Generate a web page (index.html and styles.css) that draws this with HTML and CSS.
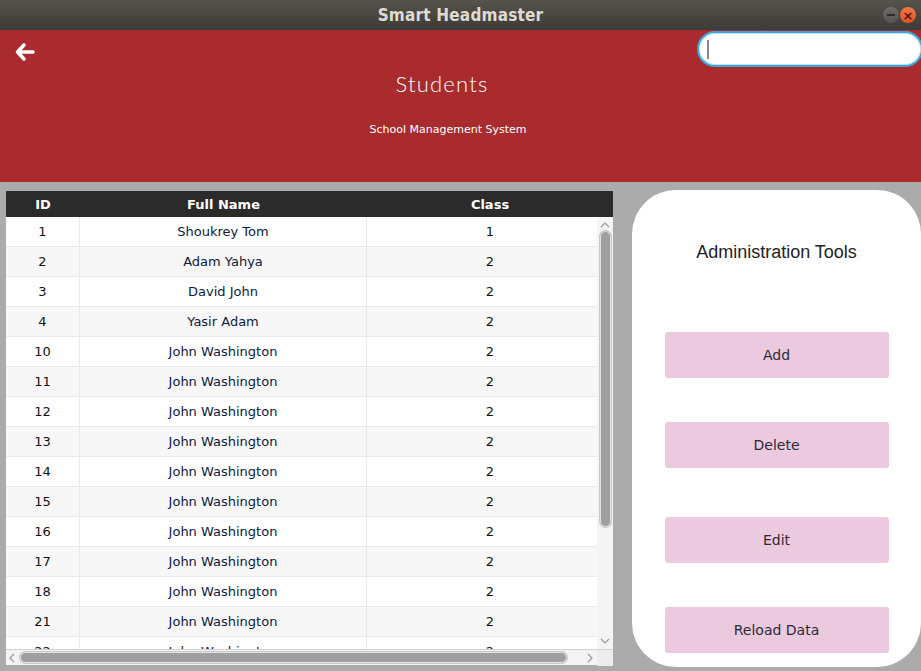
FILE: index.html
```html
<!DOCTYPE html>
<html>
<head>
<meta charset="utf-8">
<link rel="stylesheet" href="styles.css">
</head>
<body>
<div class="window">
  <div class="titlebar">
    <span class="title">Smart Headmaster</span>
    <div class="controls">
      <span class="btn-min"><span class="dash"></span></span>
      <span class="btn-close">×</span>
    </div>
  </div>
  <header class="hero">
    <svg class="back" width="20" height="20" viewBox="0 0 20 20"><path d="M9 3 L2.5 10 L9 17 M3 10 H18" fill="none" stroke="#fff" stroke-width="3.6" stroke-linecap="round" stroke-linejoin="round"/></svg>
    <div class="search"><span class="caret"></span></div>
    <h1 class="page-title">Students</h1>
    <p class="subtitle">School Management System</p>
  </header>
  <main class="content">
    <section class="table">
      <div class="thead">
        <div class="c-id">ID</div><div class="c-name">Full Name</div><div class="c-class">Class</div>
      </div>
      <div class="tbody">
        <div class="row"><div class="c-id">1</div><div class="c-name">Shoukrey Tom</div><div class="c-class">1</div></div>
        <div class="row"><div class="c-id">2</div><div class="c-name">Adam Yahya</div><div class="c-class">2</div></div>
        <div class="row"><div class="c-id">3</div><div class="c-name">David John</div><div class="c-class">2</div></div>
        <div class="row"><div class="c-id">4</div><div class="c-name">Yasir Adam</div><div class="c-class">2</div></div>
        <div class="row"><div class="c-id">10</div><div class="c-name">John Washington</div><div class="c-class">2</div></div>
        <div class="row"><div class="c-id">11</div><div class="c-name">John Washington</div><div class="c-class">2</div></div>
        <div class="row"><div class="c-id">12</div><div class="c-name">John Washington</div><div class="c-class">2</div></div>
        <div class="row"><div class="c-id">13</div><div class="c-name">John Washington</div><div class="c-class">2</div></div>
        <div class="row"><div class="c-id">14</div><div class="c-name">John Washington</div><div class="c-class">2</div></div>
        <div class="row"><div class="c-id">15</div><div class="c-name">John Washington</div><div class="c-class">2</div></div>
        <div class="row"><div class="c-id">16</div><div class="c-name">John Washington</div><div class="c-class">2</div></div>
        <div class="row"><div class="c-id">17</div><div class="c-name">John Washington</div><div class="c-class">2</div></div>
        <div class="row"><div class="c-id">18</div><div class="c-name">John Washington</div><div class="c-class">2</div></div>
        <div class="row"><div class="c-id">21</div><div class="c-name">John Washington</div><div class="c-class">2</div></div>
        <div class="row"><div class="c-id">22</div><div class="c-name">John Washington</div><div class="c-class">2</div></div>
        <div class="vscroll">
          <svg class="arrow" width="12" height="8" viewBox="0 0 12 8"><path d="M2 6 L6 2 L10 6" fill="none" stroke="#999" stroke-width="1.2"/></svg>
          <div class="vthumb"></div>
          <svg class="arrow" width="12" height="8" viewBox="0 0 12 8"><path d="M2 2 L6 6 L10 2" fill="none" stroke="#999" stroke-width="1.2"/></svg>
        </div>
      </div>
      <div class="hscroll">
        <svg class="harrow" width="8" height="12" viewBox="0 0 8 12"><path d="M6 2 L2 6 L6 10" fill="none" stroke="#999" stroke-width="1.2"/></svg>
        <div class="htrack"><div class="hthumb"></div></div>
        <svg class="harrow" width="8" height="12" viewBox="0 0 8 12"><path d="M2 2 L6 6 L2 10" fill="none" stroke="#999" stroke-width="1.2"/></svg>
        <div class="corner"></div>
      </div>
    </section>
    <aside class="panel">
      <h2 class="panel-title">Administration Tools</h2>
      <button class="tool tool-add">Add</button>
      <button class="tool tool-delete">Delete</button>
      <button class="tool tool-edit">Edit</button>
      <button class="tool tool-reload">Reload Data</button>
    </aside>
  </main>
</div>
</body>
</html>
```
FILE: styles.css
```css
* { box-sizing: border-box; }
html, body { margin: 0; padding: 0; }
body {
  width: 921px;
  height: 671px;
  overflow: hidden;
  background: #ababab;
  font-family: "DejaVu Sans", sans-serif;
}
.window { width: 921px; height: 671px; display: flex; flex-direction: column; }

.titlebar {
  height: 30px;
  flex: none;
  background: linear-gradient(#56534d, #3d3b37);
  display: flex;
  align-items: center;
  justify-content: center;
  position: relative;
}
.title {
  color: #dfdbd2;
  font-family: "DejaVu Sans Condensed", "DejaVu Sans", sans-serif;
  font-weight: bold;
  font-size: 17px;
  letter-spacing: 0.2px;
}
.controls {
  position: absolute;
  right: 5px;
  top: 7px;
  display: flex;
  gap: 1px;
}
.btn-min, .btn-close {
  width: 16px; height: 16px; border-radius: 50%;
  display: flex; align-items: center; justify-content: center;
}
.btn-min { background: linear-gradient(#6f6d68, #55534f); }
.btn-min .dash { width: 8px; height: 1.5px; background: #2e2d2b; }
.btn-close {
  background: linear-gradient(#f2764a, #e05424);
  color: #4a1b0a; font-size: 13px; line-height: 1; font-weight: bold;
}

.hero {
  height: 152px;
  flex: none;
  background: #a92b2e;
  position: relative;
  display: flex;
  flex-direction: column;
  align-items: center;
  padding-right: 39px;
}
.back { position: absolute; left: 15px; top: 12px; }
.search {
  position: absolute;
  left: 697px; top: 1px;
  width: 226px; height: 36px;
  background: #fff;
  border: 2px solid #3ba7d9;
  border-radius: 18px;
  box-shadow: inset 0 0 0 1px #bfe3f3;
}
.caret {
  position: absolute; left: 8px; top: 7px;
  width: 2px; height: 19px; background: #8a8a8a;
}
.page-title {
  margin: 41px 0 0 0;
  font-family: "Lato", sans-serif;
  font-weight: 300;
  font-size: 22px;
  letter-spacing: 1.2px;
  color: #fff;
  line-height: 26px;
  padding-left: 2px;
}
.subtitle {
  margin: 26px 0 0 14px;
  font-size: 11px;
  color: #fff;
  line-height: 14px;
}

.content {
  flex: 1;
  display: flex;
  align-items: flex-start;
  padding: 8px 0 0 6px;
  gap: 19px;
}

.table {
  margin-top: 1px;
  width: 607px;
  height: 474px;
  background: #fff;
  display: flex;
  flex-direction: column;
  font-size: 13px;
  color: #111;
}
.thead {
  height: 26px;
  flex: none;
  background: #2b2b2b;
  color: #fff;
  font-weight: bold;
  display: flex;
  align-items: center;
}
.c-id { width: 74px; text-align: center; flex: none; }
.c-name { width: 287px; text-align: center; flex: none; }
.c-class { flex: 1; text-align: center; }
.tbody {
  flex: 1;
  position: relative;
  overflow: hidden;
}
.row {
  height: 30px;
  display: flex;
  align-items: stretch;
  border-bottom: 1px solid #e9e9e9;
  background: #fff;
}
.row:nth-child(even) { background: #f7f7f7; }
.row > div { display: flex; align-items: center; justify-content: center; }
.row .c-id { border-right: 1px solid #e9e9e9; }
.row .c-name { border-right: 1px solid #e9e9e9; color: #0d1a40; }

.vscroll {
  position: absolute;
  right: 0; top: 0; bottom: 0;
  width: 16px;
  background: #f4f4f4;
  display: flex;
  flex-direction: column;
  align-items: center;
}
.vscroll .arrow { margin: 4px 0 1px; flex: none; }
.vthumb {
  width: 13px;
  height: 298px;
  border-radius: 7px;
  background: #9f9f9f;
  border: 1px solid #c9c9c9;
  box-shadow: inset 0 0 0 1px #e3e3e3;
}
.vscroll .arrow:last-child { margin-top: auto; margin-bottom: 4px; }

.hscroll {
  height: 16px;
  flex: none;
  display: flex;
  align-items: center;
  background: #f4f4f4;
  border-top: 1px solid #d0d0d0;
}
.harrow { flex: none; margin: 0 3px 0 2px; }
.htrack { flex: 1; height: 14px; display: flex; align-items: center; }
.hthumb {
  width: 549px;
  height: 13px;
  border-radius: 7px;
  background: #9f9f9f;
  border: 1px solid #c9c9c9;
  box-shadow: inset 0 0 0 1px #e3e3e3;
}
.corner { width: 16px; height: 16px; background: #ededed; flex: none; }

.panel {
  width: 289px;
  height: 477px;
  background: #fff;
  border-radius: 44px;
  display: flex;
  flex-direction: column;
  align-items: center;
}
.panel-title {
  margin: 51px 0 0 0;
  font-family: "Liberation Sans", Arial, sans-serif;
  font-weight: normal;
  font-size: 18px;
  line-height: 22px;
  color: #222;
}
.tool {
  width: 224px;
  height: 46px;
  border: none;
  border-radius: 3px;
  background: #ebc9df;
  color: #2b2b33;
  font-family: "DejaVu Sans", sans-serif;
  font-size: 14px;
  flex: none;
}
.tool-add { margin-top: 69px; }
.tool-delete { margin-top: 44px; }
.tool-edit { margin-top: 49px; }
.tool-reload { margin-top: 44px; }
```
